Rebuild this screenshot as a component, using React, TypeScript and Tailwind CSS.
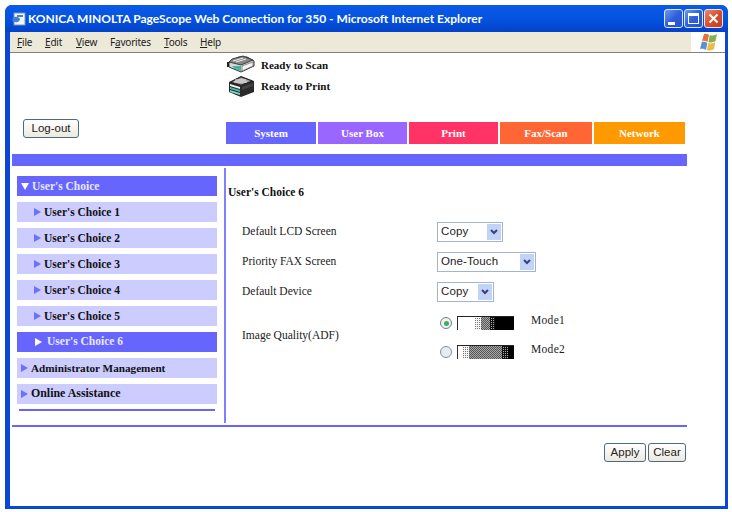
import React from 'react';

const menuItems = [
  { key: 'F', rest: 'ile', pre: '', w: 'w-[28px]' },
  { key: 'E', rest: 'dit', pre: '', w: 'w-[31px]' },
  { key: 'V', rest: 'iew', pre: '', w: 'w-[34px]' },
  { key: 'a', rest: 'vorites', pre: 'F', w: 'w-[54px]' },
  { key: 'T', rest: 'ools', pre: '', w: 'w-[36px]' },
  { key: 'H', rest: 'elp', pre: '', w: 'w-[24px]' },
];

const tabs = [
  { label: 'System', cls: 'w-[90px] bg-[#6666ff]' },
  { label: 'User Box', cls: 'w-[89px] bg-[#9966ff]' },
  { label: 'Print', cls: 'w-[89px] bg-[#ff3366]' },
  { label: 'Fax/Scan', cls: 'w-[92px] bg-[#ff6633]' },
  { label: 'Network', cls: 'w-[91px] bg-[#ff9900]' },
];

const Arrow = ({ className = '' }: { className?: string }) => (
  <svg width="7" height="8" viewBox="0 0 7 8" className={className}>
    <path d="M0 0 L7 4 L0 8 Z" fill="currentColor" />
  </svg>
);

const WinButton = ({ kind }: { kind: 'min' | 'max' | 'close' }) => {
  const bg =
    kind === 'close'
      ? 'bg-gradient-to-br from-[#e8876a] via-[#da4f2c] to-[#c23a1c]'
      : 'bg-gradient-to-br from-[#6f97ee] via-[#2f5fdc] to-[#2a50c8]';
  return (
    <div className={`w-[19px] h-[19px] rounded-[3px] border border-[#dfe8fb] flex items-center justify-center ${bg}`}>
      {kind === 'min' && <div className="w-[7px] h-[3px] bg-white mt-[9px] mr-[4px]" />}
      {kind === 'max' && <div className="w-[11px] h-[11px] border border-white border-t-[3px]" />}
      {kind === 'close' && (
        <svg width="11" height="11" viewBox="0 0 11 11">
          <path d="M1.5 1.5 L9.5 9.5 M9.5 1.5 L1.5 9.5" stroke="white" strokeWidth="2" />
        </svg>
      )}
    </div>
  );
};

const ScannerIcon = () => (
  <svg width="28" height="19" viewBox="0 0 28 19">
    <path d="M2 7 L12 2 H20 L27 6 V11 L14 17 L2 12 Z" fill="#d8d8d8" stroke="#333" strokeWidth="1" />
    <path d="M2 7 L5 4 L16 1 L26 5 L14 10 Z" fill="#888" stroke="#222" strokeWidth="0.8" />
    <path d="M6 6 L16 3 M9 7 L19 4" stroke="#eee" strokeWidth="1" />
    <path d="M5 11 L14 11 L14 16 L8 14 Z" fill="#3fb5a8" />
    <path d="M15 11 L26 7 V11 L15 16 Z" fill="#f4f4f4" stroke="#555" strokeWidth="0.6" />
    <path d="M1 7 V12" stroke="#222" strokeWidth="2" />
  </svg>
);

const PrinterIcon = () => (
  <svg width="28" height="24" viewBox="0 0 28 24">
    <path d="M2 8 L14 2 L27 7 V18 L14 23 L2 18 Z" fill="#2a2a2a" />
    <path d="M4 8 L14 3 L25 7 L14 11 Z" fill="#a8a8a8" stroke="#111" strokeWidth="0.7" />
    <path d="M8 6 H19 M7 8 H20" stroke="#eee" strokeWidth="0.9" />
    <path d="M3 10 L13 13 V15 L3 12 Z" fill="#f2f2f2" />
    <path d="M3 13 L13 16 V18 L3 15 Z" fill="#49b7a8" />
    <path d="M3 16 L13 19 V21 L3 18 Z" fill="#7fd1c4" />
    <path d="M15 13 L26 9 V12 L15 16 Z" fill="#444" />
  </svg>
);

const Flag = () => (
  <svg width="18" height="18" viewBox="0 0 18 18">
    <path d="M5 1 C7 0.5 8.5 1 10 2 L8.5 9 C7 8 5 7.5 3 8 Z" fill="#e3703f" />
    <path d="M10.8 2 C13 3 15.5 2.5 18 1 L16.5 8 C14 9.5 11.5 10 9.4 9 Z" fill="#86b04e" />
    <path d="M2.8 9 C5 8.5 7 9 8.3 10 L7 17 C5.5 16 3 15.5 1 16 Z" fill="#5a8fd0" />
    <path d="M9.2 10 C11.5 11 14 10.5 16.3 9 L15 16 C12.5 17.5 10 18 8 17 Z" fill="#e9bc45" />
  </svg>
);

const Select = ({ className, text }: { className: string; text: string }) => (
  <div className={`h-[20px] bg-white border border-[#a3b4d2] flex items-center justify-between pl-[3px] pr-[1px] ${className}`}>
    <span className="font-['Liberation_Sans',sans-serif] text-[11.5px] text-[#222] tracking-[0.1px]">{text}</span>
    <div className="w-[14px] h-[16px] bg-[#c3d3f6] flex items-center justify-center">
      <svg width="8" height="6" viewBox="0 0 8 6">
        <path d="M1 1 L4 4 L7 1" stroke="#2f4480" strokeWidth="2" fill="none" />
      </svg>
    </div>
  </div>
);

type Stop = [number, number, string];

const Ramp = ({ id, stops }: { id: string; stops: Stop[] }) => (
  <svg width="57" height="14" viewBox="0 0 57 14" shapeRendering="crispEdges">
    <defs>
      <pattern id={`${id}-mid`} width="2" height="2" patternUnits="userSpaceOnUse">
        <rect width="2" height="2" fill="#a8a8a8" />
        <rect width="1" height="1" fill="#555" />
        <rect x="1" y="1" width="1" height="1" fill="#555" />
      </pattern>
      <pattern id={`${id}-light`} width="2" height="2" patternUnits="userSpaceOnUse">
        <rect width="2" height="2" fill="#f4f4f4" />
        <rect width="1" height="1" fill="#777" />
      </pattern>
      <pattern id={`${id}-dark`} width="2" height="2" patternUnits="userSpaceOnUse">
        <rect width="2" height="2" fill="#111" />
        <rect width="1" height="1" fill="#aaa" />
      </pattern>
    </defs>
    <rect width="57" height="14" fill="white" />
    {stops.map(([x, w, f], i) => (
      <rect key={i} x={x} y="0" width={w} height="14" fill={f.startsWith('#') ? f : `url(#${id}-${f})`} />
    ))}
    <rect x="0" y="0" width="1" height="14" fill="#333" />
    <rect x="0" y="0" width="57" height="1" fill="#222" />
  </svg>
);

const SideItem = ({
  label,
  active = false,
  sub = false,
  textClass = 'text-[11.5px]',
}: {
  label: string;
  active?: boolean;
  sub?: boolean;
  textClass?: string;
}) => (
  <div className={`h-[20px] mb-[6px] flex items-center ${active ? 'bg-[#6666ff] text-[#e8e8ff]' : 'bg-[#ccccff] text-[#111]'} ${sub ? 'pl-[17px]' : 'pl-[4px]'}`}>
    <Arrow className={active ? 'text-white mr-[5px] ml-[1px]' : 'text-[#6f6fff] mr-[3px]'} />
    <span className={textClass}>{label}</span>
  </div>
);

export default function App() {
  return (
    <div className="w-[732px] h-[512px] bg-white pt-[5px] pl-[5px] overflow-hidden font-['Liberation_Serif',serif]">
      <div className="w-[723px] h-[504px] bg-[#0a46d8] rounded-t-[7px] flex flex-col pb-[3px]">
        {/* Title bar */}
        <div className="h-[27px] flex-none rounded-t-[7px] bg-gradient-to-b from-[#0a5ae8] via-[#0553e0] to-[#0342c8] flex items-center pl-[5px] pr-[5px]">
          <svg width="16" height="16" viewBox="0 0 16 16" className="flex-none">
            <rect x="4" y="2" width="11" height="12" fill="#f2f5fa" stroke="#7a94b8" />
            <rect x="7" y="4" width="6" height="2" fill="#4f7fc8" />
            <path d="M2 9 C3 5 8 5 10 8 C10 11 5 13 2 9 Z" fill="#3f7fd8" />
          </svg>
          <span className="ml-[2px] flex-1 font-['Lato',sans-serif] font-bold text-[12px] text-white whitespace-nowrap">
            KONICA MINOLTA PageScope Web Connection for 350 - Microsoft Internet Explorer
          </span>
          <div className="flex gap-[1px]">
            <WinButton kind="min" />
            <WinButton kind="max" />
            <WinButton kind="close" />
          </div>
        </div>

        <div className="flex-1 mx-[5px] mr-[3px] bg-white flex flex-col min-h-0">
          {/* Menu bar */}
          <div className="h-[21px] flex-none flex border-b border-[#85827a]">
            <div className="w-[681px] bg-[#ece9d8] flex items-center pl-[7px] font-['Noto_Sans',sans-serif] text-[10px] tracking-[-0.2px] text-[#222]">
              {menuItems.map((m) => (
                <span key={m.rest} className={m.w}>
                  {m.pre}
                  <span className="underline">{m.key}</span>
                  {m.rest}
                </span>
              ))}
            </div>
            <div className="flex-1 flex items-center justify-center bg-white">
              <Flag />
            </div>
          </div>

          {/* Page header */}
          <div className="h-[101px] flex-none flex">
            <div className="w-[216px] flex-none pl-[13px] pt-[66px]">
              <button className="w-[56px] h-[19px] bg-gradient-to-b from-white to-[#ece9df] border border-[#4f6a80] rounded-[3px] font-['Liberation_Sans',sans-serif] text-[11.5px] text-[#222] flex items-center justify-center">
                Log-out
              </button>
            </div>
            <div className="flex-1 flex flex-col">
              <div className="flex items-center h-[20px] pl-[1px] mt-[1px] gap-[6px] text-[11px] font-bold text-[#111]">
                <ScannerIcon />
                <span className="mt-[2px]">Ready to Scan</span>
              </div>
              <div className="flex items-center h-[23px] pl-[1px] gap-[6px] text-[11px] font-bold text-[#111]">
                <PrinterIcon />
                <span className="mt-[2px]">Ready to Print</span>
              </div>
              <div className="flex gap-[2px] mt-[25px]">
                {tabs.map((t) => (
                  <div key={t.label} className={`h-[22px] flex items-center justify-center text-white text-[11px] font-bold ${t.cls}`}>
                    {t.label}
                  </div>
                ))}
              </div>
            </div>
          </div>

          <div className="h-[12px] flex-none ml-[2px] w-[675px] bg-[#6666ff]" />

          {/* Main */}
          <div className="h-[257px] flex-none flex mt-[2px]">
            <div className="w-[214px] flex-none pl-[7px] pt-[8px] font-bold">
              <div className="w-[200px]">
                <div className="h-[20px] mb-[6px] bg-[#6666ff] text-[#e8e8ff] flex items-center pl-[4px]">
                  <svg width="8" height="7" viewBox="0 0 8 7" className="mr-[3px] text-white">
                    <path d="M0 0 H8 L4 7 Z" fill="currentColor" />
                  </svg>
                  <span className="text-[11.5px] mt-[2px]">User's Choice</span>
                </div>
                {[1, 2, 3, 4, 5].map((n) => (
                  <SideItem key={n} label={`User's Choice ${n}`} sub textClass="text-[11.5px] mt-[2px]" />
                ))}
                <SideItem label="User's Choice 6" sub active />
                <SideItem label="Administrator Management" textClass="text-[11.2px]" />
                <SideItem label="Online Assistance" textClass="text-[11.9px]" />
                <div className="h-[1.5px] bg-[#6666ff] mx-[2px] -mt-[1px]" />
              </div>
            </div>
            <div className="w-[2px] h-[255px] flex-none bg-[#7f7fff]" />
            <div className="flex-1 pl-[2px] text-[11.5px] text-[#222]">
              <div className="mt-[17px] h-[14px] text-[11.5px] font-bold text-[#111] leading-[14px]">User's Choice 6</div>
              <div className="mt-[23px] pl-[14px] flex flex-col">
                <div className="flex items-center h-[20px]">
                  <span className="w-[195px]">Default LCD Screen</span>
                  <Select className="w-[66px]" text="Copy" />
                </div>
                <div className="flex items-center h-[20px] mt-[10px]">
                  <span className="w-[195px]">Priority FAX Screen</span>
                  <Select className="w-[99px]" text="One-Touch" />
                </div>
                <div className="flex items-center h-[20px] mt-[10px]">
                  <span className="w-[195px]">Default Device</span>
                  <Select className="w-[57px]" text="Copy" />
                </div>
                <div className="flex items-center mt-[14px]">
                  <span className="w-[195px] mb-[4px]">Image Quality(ADF)</span>
                  <div className="flex flex-col gap-[15px]">
                    <div className="flex items-center">
                      <div className="ml-[3px] w-[12px] h-[12px] rounded-full border border-[#6b7f9c] bg-[#f2f2ee] flex items-center justify-center">
                        <div className="w-[5px] h-[5px] rounded-full bg-[#3fae5a]" />
                      </div>
                      <div className="ml-[5px]">
                        <Ramp id="d1" stops={[[18, 6, 'light'], [24, 9, 'mid'], [33, 5, 'dark'], [38, 19, '#000000']]} />
                      </div>
                      <span className="ml-[17px] tracking-[0.3px] -mt-[4px]">Mode1</span>
                    </div>
                    <div className="flex items-center">
                      <div className="ml-[3px] w-[12px] h-[12px] rounded-full border border-[#7f8fa8] bg-[#e8ecf2]" />
                      <div className="ml-[5px]">
                        <Ramp id="d2" stops={[[6, 6, 'light'], [12, 33, 'mid'], [45, 6, 'dark'], [51, 6, '#000000']]} />
                      </div>
                      <span className="ml-[17px] tracking-[0.3px] -mt-[4px]">Mode2</span>
                    </div>
                  </div>
                </div>
              </div>
            </div>
          </div>

          <div className="h-[2px] flex-none ml-[2px] w-[675px] bg-[#6666ff]" />

          {/* Buttons */}
          <div className="ml-[594px] mt-[16px] flex gap-[2px] font-['Liberation_Sans',sans-serif] text-[11.5px] text-[#222]">
            <button className="w-[42px] h-[19px] bg-gradient-to-b from-white to-[#ece9df] border border-[#4f6a80] rounded-[3px] flex items-center justify-center">
              Apply
            </button>
            <button className="w-[38px] h-[19px] bg-gradient-to-b from-white to-[#ece9df] border border-[#4f6a80] rounded-[3px] flex items-center justify-center">
              Clear
            </button>
          </div>
        </div>
      </div>
    </div>
  );
}
